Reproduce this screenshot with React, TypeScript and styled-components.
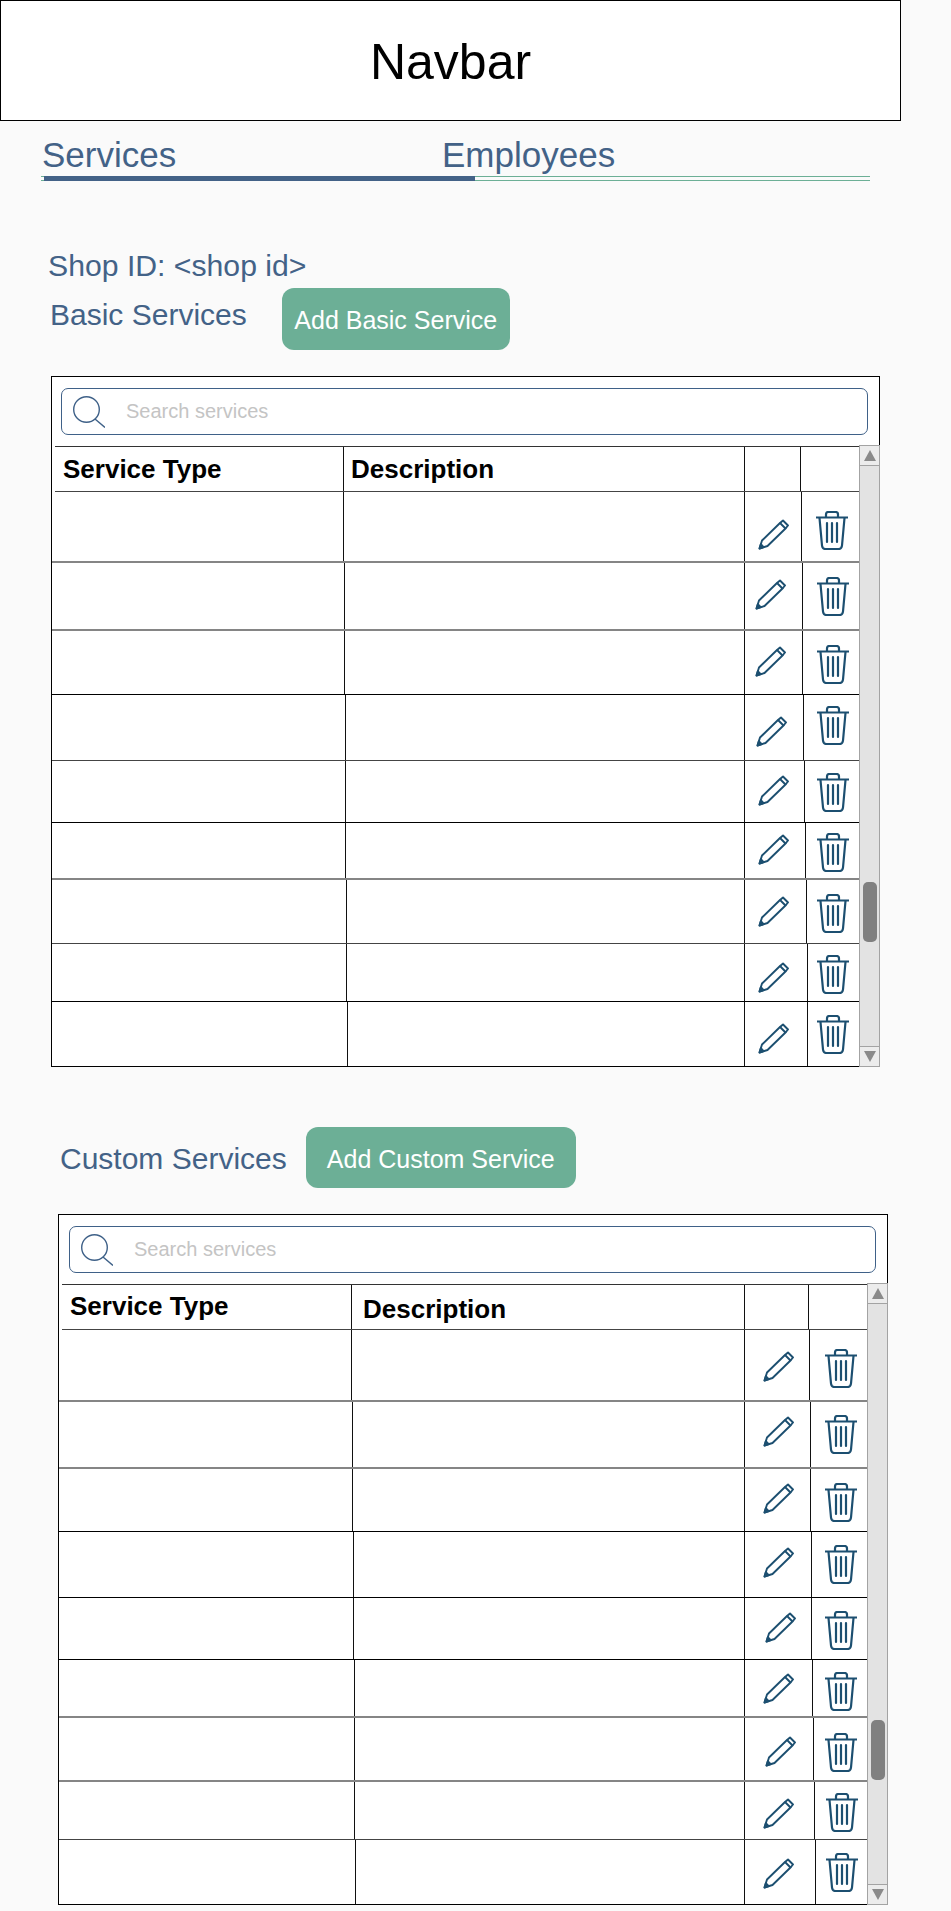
import React, { FC } from "react";
import styled, { createGlobalStyle } from "styled-components";

const GlobalStyle = createGlobalStyle`
	html, body {
		margin: 0;
		padding: 0;
		background: #fafafa;
		font-family: "Liberation Sans", Arial, sans-serif;
	}
	* {
		box-sizing: border-box;
	}
`;

const BLUE = "#436287";
const GREEN = "#6caf96";
const ICON = "#1c4f70";

const LINE_TONES: Record<string, string> = {
	g: "2px solid #858585",
	d: "1px solid #444",
	k: "1px solid #000",
};

// styled components
const Page = styled.div`
	width: 951px;
	height: 1911px;
	overflow: hidden;
`;

const Navbar = styled.header`
	display: flex;
	align-items: center;
	justify-content: center;
	width: 901px;
	height: 121px;
	padding-top: 3px;
	background: #fff;
	border: 1px solid #000;
	font-size: 50px;
	line-height: 58px;
	color: #000;
`;

const Tabs = styled.nav`
	display: flex;
	margin: 14px 0 0 42px;
`;

const Tab = styled.div<{ $width: number }>`
	width: ${(p) => p.$width}px;
	font-size: 35px;
	line-height: 40px;
	color: ${BLUE};
`;

const TabTrack = styled.div`
	width: 829px;
	height: 5px;
	margin: 1px 0 0 41px;
	padding-left: 3px;
	border-top: 1px solid ${GREEN};
	border-bottom: 1px solid ${GREEN};
`;

const TabFill = styled.div`
	width: 431px;
	height: 5px;
	margin-top: -1px;
	background: ${BLUE};
`;

const ShopId = styled.div`
	margin: 68px 0 0 48px;
	font-size: 30.2px;
	line-height: 34px;
	color: ${BLUE};
`;

const SectionHead = styled.div<{ $top: number; $left: number; $gap: number }>`
	display: flex;
	align-items: flex-start;
	gap: ${(p) => p.$gap}px;
	margin: ${(p) => p.$top}px 0 0 ${(p) => p.$left}px;
`;

const SectionTitle = styled.h2<{ $drop: number }>`
	margin: 0;
	padding-top: ${(p) => p.$drop}px;
	font-size: 30px;
	font-weight: 400;
	line-height: 34px;
	color: ${BLUE};
`;

const AddButton = styled.button<{ $width: number; $height: number }>`
	width: ${(p) => p.$width}px;
	height: ${(p) => p.$height}px;
	padding: 3px 0 0;
	background: ${GREEN};
	border: none;
	border-radius: 12px;
	font-family: inherit;
	font-size: 25px;
	color: #fff;
`;

const Panel = styled.section<{ $left: number; $width: number }>`
	width: ${(p) => p.$width}px;
	margin: 26px 0 0 ${(p) => p.$left}px;
	background: #fff;
	border: 1px solid #000;
	border-bottom: none;
`;

const SearchBar = styled.label<{ $left: number }>`
	display: flex;
	align-items: center;
	gap: 19px;
	width: 807px;
	height: 47px;
	margin: 11px 0 10px ${(p) => p.$left}px;
	padding-left: 11px;
	border: 1px solid #3f6188;
	border-radius: 7px;
`;

const SearchInput = styled.input`
	flex: 1;
	min-width: 0;
	padding: 0 2px;
	border: none;
	outline: none;
	background: transparent;
	font-family: inherit;
	font-size: 20px;
	&::placeholder {
		color: #c4c4c4;
		opacity: 1;
	}
`;

const PanelBody = styled.div`
	display: flex;
`;

const Rows = styled.div`
	flex: 1;
	min-width: 0;
`;

const HeaderRow = styled.div<{ $height: number }>`
	display: flex;
	height: ${(p) => p.$height}px;
	margin: 1px 0 0 3px;
	border-top: 1px solid #333;
	border-bottom: 1px solid #444;
`;

const Row = styled.div<{ $height: number; $tone: string }>`
	display: flex;
	height: ${(p) => p.$height}px;
	border-bottom: ${(p) => LINE_TONES[p.$tone]};
`;

const Cell = styled.div<{ $width: number }>`
	flex: none;
	width: ${(p) => p.$width}px;
	border-right: 1px solid #111;
`;

const HeadCell = styled(Cell)<{ $pad: number; $top: number }>`
	padding: ${(p) => p.$top}px 0 0 ${(p) => p.$pad}px;
	font-size: 26px;
	font-weight: 700;
	line-height: 30px;
	color: #000;
`;

const IconCell = styled(Cell)<{ $x: number; $y: number }>`
	display: flex;
	align-items: flex-start;
	padding: ${(p) => p.$y}px 0 0 ${(p) => p.$x}px;
`;

const LastCell = styled.div<{ $x?: number; $y?: number }>`
	flex: 1;
	display: flex;
	align-items: flex-start;
	padding: ${(p) => p.$y ?? 0}px 0 0 ${(p) => p.$x ?? 0}px;
`;

const Scrollbar = styled.div`
	flex: none;
	display: flex;
	flex-direction: column;
	width: 21px;
	margin-right: -1px;
	background: #e3e3e3;
	border: 1px solid #a3a3a3;
`;

const ScrollArrow = styled.div<{ $down?: boolean }>`
	display: flex;
	align-items: center;
	justify-content: center;
	height: 20px;
	background: #ececec;
	${(p) => (p.$down ? "border-top" : "border-bottom")}: 1px solid #a3a3a3;
	&::after {
		content: "";
		border-left: 6px solid transparent;
		border-right: 6px solid transparent;
		${(p) => (p.$down ? "border-top" : "border-bottom")}: 11px solid #8a8a8a;
	}
`;

const ScrollTrack = styled.div`
	flex: 1;
	padding: 416px 0 0 3px;
`;

const ScrollThumb = styled.div`
	width: 14px;
	height: 60px;
	background: #808080;
	border-radius: 5px;
`;

// icons
const SearchIcon: FC = () => (
	<svg width="32" height="32" viewBox="0 0 32 32" fill="none" stroke="#3f6188" strokeWidth="1.4">
		<circle cx="13.5" cy="13.5" r="12.8" />
		<path d="M22 23 L32 31.5" />
	</svg>
);

const PencilIcon: FC = () => (
	<svg width="31" height="31" viewBox="0 0 31 31" fill="none" stroke={ICON} strokeWidth="1.9" strokeLinejoin="round">
		<path d="M1.5 29.5 L4 21.5 L22 4 L27.5 9.5 L9.5 27 Z" />
		<path d="M22 4 L25 1.5 L30 6.5 L27.5 9.5" />
		<path d="M1.5 29.5 L2.8 25.3 L5.8 28.2 Z" fill={ICON} />
	</svg>
);

const TrashIcon: FC = () => (
	<svg width="32" height="39" viewBox="0 0 32 39" fill="none" stroke={ICON} strokeWidth="2.2" strokeLinecap="round">
		<path d="M0.5 6.5 H31.5" />
		<path d="M10 6 V3.5 Q10 1 12.5 1 H19.5 Q22 1 22 3.5 V6" />
		<path d="M3.5 7 L6 34.5 Q6.4 38 9.5 38 H22.5 Q25.6 38 26 34.5 L28.5 7" />
		<path d="M11 12 V31 M16 12 V31 M21 12 V31" />
	</svg>
);

// table data, all values are page coordinates read off the mockup
type RowData = {
	line: number;
	col1: number;
	col3: number;
	edit: [number, number];
	del: [number, number];
	tone: string;
};

type TableData = {
	left: number;
	width: number;
	searchLeft: number;
	start: number;
	headLine: number;
	head: { col1: number; col3: number; typeTop: number; descTop: number; descPad: number };
	rows: RowData[];
};

const basicTable: TableData = {
	left: 51,
	width: 829,
	searchLeft: 9,
	start: 446,
	headLine: 491,
	head: { col1: 343, col3: 800, typeTop: 7, descTop: 7, descPad: 7 },
	rows: [
		{ line: 562, col1: 343, col3: 801, edit: [773, 534], del: [832, 530], tone: "g" },
		{ line: 630, col1: 344, col3: 802, edit: [770, 594], del: [833, 596], tone: "g" },
		{ line: 694, col1: 344, col3: 802, edit: [770, 661], del: [833, 664], tone: "k" },
		{ line: 760, col1: 345, col3: 803, edit: [771, 731], del: [833, 725], tone: "d" },
		{ line: 822, col1: 345, col3: 804, edit: [773, 790], del: [833, 792], tone: "k" },
		{ line: 879, col1: 345, col3: 805, edit: [773, 849], del: [833, 852], tone: "g" },
		{ line: 943, col1: 346, col3: 806, edit: [773, 911], del: [833, 913], tone: "d" },
		{ line: 1001, col1: 346, col3: 807, edit: [773, 977], del: [833, 974], tone: "k" },
		{ line: 1066, col1: 347, col3: 807, edit: [773, 1038], del: [833, 1034], tone: "k" },
	],
};

const customTable: TableData = {
	left: 58,
	width: 830,
	searchLeft: 10,
	start: 1284,
	headLine: 1329,
	head: { col1: 351, col3: 808, typeTop: 6, descTop: 9, descPad: 11 },
	rows: [
		{ line: 1401, col1: 351, col3: 809, edit: [778, 1366], del: [841, 1368], tone: "g" },
		{ line: 1468, col1: 352, col3: 810, edit: [778, 1431], del: [841, 1434], tone: "g" },
		{ line: 1531, col1: 352, col3: 810, edit: [778, 1498], del: [841, 1502], tone: "k" },
		{ line: 1597, col1: 353, col3: 811, edit: [778, 1562], del: [841, 1564], tone: "k" },
		{ line: 1659, col1: 353, col3: 811, edit: [780, 1627], del: [841, 1630], tone: "k" },
		{ line: 1717, col1: 354, col3: 812, edit: [778, 1688], del: [841, 1691], tone: "g" },
		{ line: 1781, col1: 354, col3: 813, edit: [780, 1751], del: [841, 1752], tone: "g" },
		{ line: 1839, col1: 354, col3: 814, edit: [778, 1813], del: [842, 1812], tone: "d" },
		{ line: 1904, col1: 355, col3: 815, edit: [778, 1873], del: [842, 1872], tone: "k" },
	],
};

const ServiceTable: FC<{ data: TableData }> = ({ data }) => {
	const inner = data.left + 1;
	const headStart = inner + 3;
	return (
		<Panel $left={data.left} $width={data.width}>
			<SearchBar $left={data.searchLeft}>
				<SearchIcon />
				<SearchInput placeholder='Search services' />
			</SearchBar>
			<PanelBody>
				<Rows>
					<HeaderRow $height={data.headLine - data.start + 1}>
						<HeadCell $width={data.head.col1 - headStart + 1} $pad={8} $top={data.head.typeTop}>
							Service Type
						</HeadCell>
						<HeadCell $width={744 - data.head.col1} $pad={data.head.descPad} $top={data.head.descTop}>
							Description
						</HeadCell>
						<Cell $width={data.head.col3 - 744} />
						<LastCell />
					</HeaderRow>
					{data.rows.map((row, i) => {
						const top = (i === 0 ? data.headLine : data.rows[i - 1].line) + 1;
						return (
							<Row key={row.line} $height={row.line - top + 1} $tone={row.tone}>
								<Cell $width={row.col1 - inner + 1} />
								<Cell $width={744 - row.col1} />
								<IconCell
									$width={row.col3 - 744}
									$x={row.edit[0] - 15.5 - 745}
									$y={row.edit[1] - 15.5 - top}
								>
									<PencilIcon />
								</IconCell>
								<LastCell $x={row.del[0] - 16 - row.col3 - 1} $y={row.del[1] - 19.5 - top}>
									<TrashIcon />
								</LastCell>
							</Row>
						);
					})}
				</Rows>
				<Scrollbar>
					<ScrollArrow />
					<ScrollTrack>
						<ScrollThumb />
					</ScrollTrack>
					<ScrollArrow $down />
				</Scrollbar>
			</PanelBody>
		</Panel>
	);
};

const App: FC = () => {
	return (
		<Page>
			<GlobalStyle />
			<Navbar>Navbar</Navbar>
			<Tabs>
				<Tab $width={400}>Services</Tab>
				<Tab $width={300}>Employees</Tab>
			</Tabs>
			<TabTrack>
				<TabFill />
			</TabTrack>
			<ShopId>Shop ID: &lt;shop id&gt;</ShopId>
			<SectionHead $top={5} $left={50} $gap={35}>
				<SectionTitle $drop={10}>Basic Services</SectionTitle>
				<AddButton $width={228} $height={62}>
					Add Basic Service
				</AddButton>
			</SectionHead>
			<ServiceTable data={basicTable} />
			<SectionHead $top={60} $left={60} $gap={19}>
				<SectionTitle $drop={15}>Custom Services</SectionTitle>
				<AddButton $width={270} $height={61}>
					Add Custom Service
				</AddButton>
			</SectionHead>
			<ServiceTable data={customTable} />
		</Page>
	);
};

export default App;
